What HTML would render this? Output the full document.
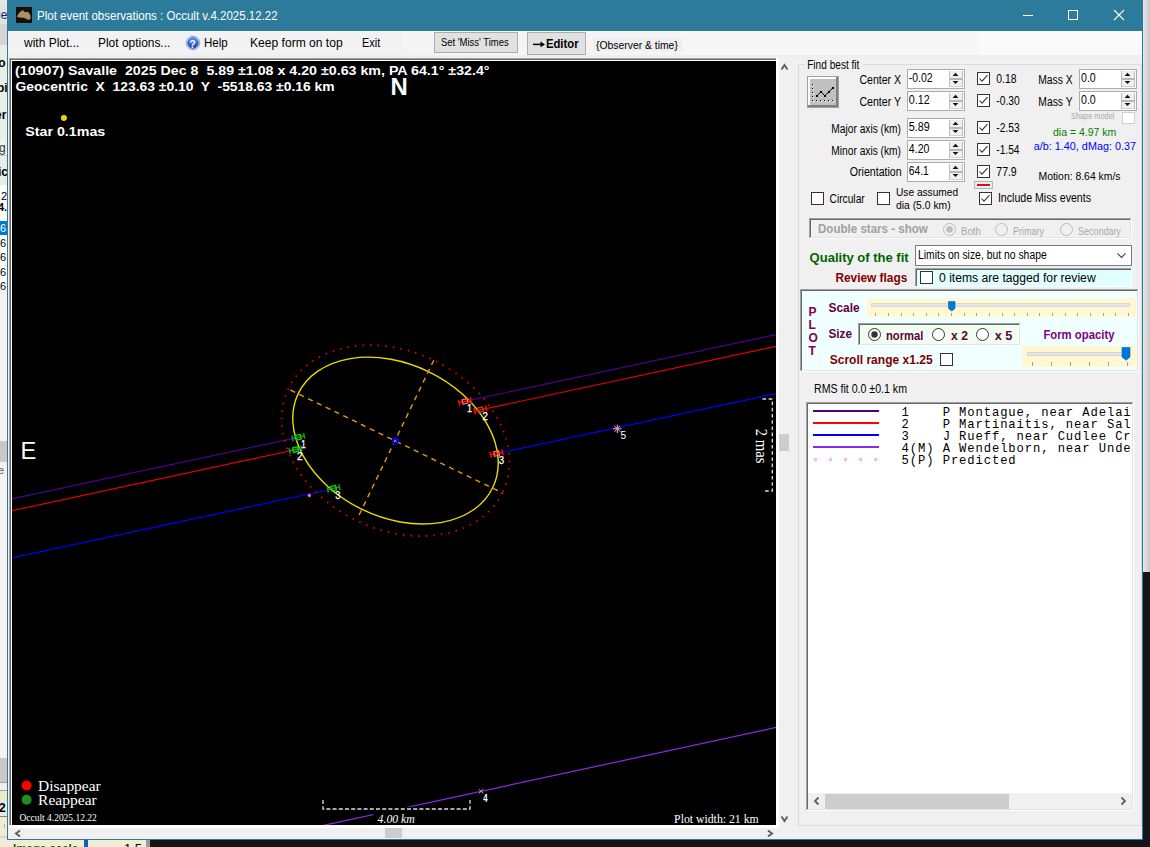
<!DOCTYPE html>
<html><head><meta charset="utf-8"><title>Plot event observations</title>
<style>html,body{margin:0;padding:0;overflow:hidden;background:#141414;width:1150px;height:847px}
svg{position:absolute;left:0;top:0;display:block}
text{white-space:pre}</style></head>
<body><svg width="1150" height="847" viewBox="0 0 1150 847">
<rect x="0" y="0" width="1150" height="847" fill="#141414" />
<rect x="0" y="0" width="7" height="847" fill="#eef3ee" />
<rect x="0" y="0" width="7" height="4" fill="#e6e6e6" />
<rect x="0" y="4" width="7" height="20" fill="#e2e2e2" />
<text x="-6.00" y="19" fill="#1a1a6a" style="font-family:'Liberation Sans';font-size:12px;font-weight:normal;font-style:normal" xml:space="preserve" >ue</text>
<rect x="0" y="24" width="7" height="21" fill="#d6d6d6" />
<rect x="0" y="45" width="7" height="95" fill="#e8f0e6" />
<text x="-5.00" y="67" fill="#000" style="font-family:'Liberation Sans';font-size:12px;font-weight:bold;font-style:normal" xml:space="preserve" >lo</text>
<text x="-3.00" y="92" fill="#000" style="font-family:'Liberation Sans';font-size:12px;font-weight:bold;font-style:normal" xml:space="preserve" >bi</text>
<text x="-5.00" y="119" fill="#000" style="font-family:'Liberation Sans';font-size:12px;font-weight:bold;font-style:normal" xml:space="preserve" >er</text>
<rect x="0" y="140" width="7" height="15" fill="#f0f0f0" />
<rect x="0" y="155" width="7" height="1" fill="#c8c8c8" />
<text x="-1.00" y="152" fill="#333" style="font-family:'Liberation Sans';font-size:12px;font-weight:normal;font-style:normal" xml:space="preserve" >g</text>
<rect x="0" y="156" width="7" height="29" fill="#e6eee6" />
<text x="-2.00" y="176" fill="#000" style="font-family:'Liberation Sans';font-size:12px;font-weight:bold;font-style:normal" xml:space="preserve" >ic</text>
<rect x="0" y="185" width="7" height="260" fill="#ffffff" />
<text x="1.00" y="200" fill="#000" style="font-family:'Liberation Sans';font-size:11px;font-weight:normal;font-style:normal" xml:space="preserve" >2</text>
<text x="-2.00" y="211" fill="#000" style="font-family:'Liberation Sans';font-size:11px;font-weight:bold;font-style:normal" xml:space="preserve" >4.</text>
<rect x="0" y="221" width="7" height="14" fill="#0078d7" />
<text x="0.00" y="232" fill="#fff" style="font-family:'Liberation Sans';font-size:11px;font-weight:normal;font-style:normal" xml:space="preserve" >6</text>
<text x="0.00" y="247" fill="#000" style="font-family:'Liberation Sans';font-size:11px;font-weight:normal;font-style:normal" xml:space="preserve" >6</text>
<text x="0.00" y="261" fill="#000" style="font-family:'Liberation Sans';font-size:11px;font-weight:normal;font-style:normal" xml:space="preserve" >6</text>
<text x="0.00" y="276" fill="#000" style="font-family:'Liberation Sans';font-size:11px;font-weight:normal;font-style:normal" xml:space="preserve" >6</text>
<text x="0.00" y="290" fill="#000" style="font-family:'Liberation Sans';font-size:11px;font-weight:normal;font-style:normal" xml:space="preserve" >6</text>
<rect x="0" y="290" width="7" height="151" fill="#f2f2f2" />
<rect x="0" y="441" width="7" height="21" fill="#c8c8c8" />
<rect x="0" y="462" width="7" height="16" fill="#f0f0f0" />
<text x="-2.00" y="474" fill="#7a5a30" style="font-family:'Liberation Sans';font-size:11px;font-weight:normal;font-style:normal" xml:space="preserve" >e</text>
<rect x="0" y="478" width="7" height="280" fill="#f4f4f4" />
<rect x="0" y="758" width="7" height="24" fill="#c8c8c8" />
<rect x="0" y="782" width="7" height="1" fill="#a0a0a0" />
<rect x="0" y="783" width="7" height="7" fill="#eeeeee" />
<rect x="0" y="790" width="7" height="1" fill="#a0a0a0" />
<rect x="0" y="791" width="7" height="9" fill="#ece8c8" />
<rect x="0" y="800" width="7" height="16" fill="#e8e8e8" />
<text x="-1.00" y="812" fill="#000" style="font-family:'Liberation Sans';font-size:12px;font-weight:bold;font-style:normal" xml:space="preserve" >2</text>
<rect x="0" y="816" width="7" height="1" fill="#808080" />
<rect x="0" y="817" width="7" height="19" fill="#f0ecd0" />
<rect x="4" y="824" width="1" height="4" fill="#b0b0b0" />
<rect x="0" y="836" width="7" height="2" fill="#d4d4d4" />
<rect x="0" y="838" width="7" height="2" fill="#f0ecd0" />
<rect x="0" y="840" width="150" height="7" fill="#f1eed5" />
<rect x="84" y="840" width="4" height="7" fill="#1060c0" />
<rect x="146" y="840" width="4" height="7" fill="#9a9a9a" />
<text x="13.00" y="853" fill="#007000" style="font-family:'Liberation Sans';font-size:13px;font-weight:bold;font-style:normal" xml:space="preserve" textLength="65.20" lengthAdjust="spacingAndGlyphs" >Image scale</text>
<text x="124.00" y="853" fill="#000" style="font-family:'Liberation Sans';font-size:13px;font-weight:normal;font-style:normal" xml:space="preserve" >1.5</text>
<defs><linearGradient id="rg" x1="0" y1="0" x2="1" y2="0"><stop offset="0" stop-color="#e6e6e6"/><stop offset="1" stop-color="#c8c8c8"/></linearGradient></defs>
<rect x="1143" y="0" width="7" height="572" fill="url(#rg)"/>
<rect x="1143" y="572" width="7" height="275" fill="#161616" />
<rect x="7" y="0" width="1136" height="840" fill="#2d7b9a" />
<rect x="8" y="31" width="1134" height="808" fill="#f0f0f0" />
<rect x="16" y="7" width="16" height="16" fill="#12100c"/>
<path d="M17.1 16.3 C18 13.5 20.5 11.5 22 10.4 C23 9.9 24 11.5 25.1 12.4 C26 11.8 27.3 11.6 28.3 12.4 C30 13.5 30.8 15.5 30.6 17.2 C30.5 19 29.8 20 28.5 19.8 C27 19.6 25.5 18.4 24 17.8 C22.5 17.5 21 17.6 19.5 17.4 C18 17.4 17 17.2 17.1 16.3 Z" fill="#ae8e66"/>
<text x="37.00" y="20" fill="#ffffff" style="font-family:'Liberation Sans';font-size:12px;font-weight:normal;font-style:normal" xml:space="preserve" textLength="240.69" lengthAdjust="spacingAndGlyphs" >Plot event observations : Occult v.4.2025.12.22</text>
<rect x="1023" y="15" width="10" height="1" fill="#ffffff" />
<rect x="1068.5" y="10.5" width="9" height="9" fill="none" stroke="#fff" stroke-width="1"/>
<path d="M1114 10 L1124 20 M1124 10 L1114 20" stroke="#fff" stroke-width="1.1"/>
<rect x="8" y="31" width="1134" height="1" fill="#fcfbfb" />
<rect x="8" y="32" width="395" height="23" fill="#f2f2f2" />
<rect x="403" y="32" width="277" height="23" fill="#f4f4f4" />
<rect x="680" y="32" width="300" height="23" fill="#f7f7f7" />
<rect x="980" y="32" width="162" height="23" fill="#fafafa" />
<rect x="8" y="55" width="1134" height="3" fill="#efefef" />
<text x="24.00" y="47" fill="#000" style="font-family:'Liberation Sans';font-size:12px;font-weight:normal;font-style:normal" xml:space="preserve" textLength="55.33" lengthAdjust="spacingAndGlyphs" >with Plot...</text>
<text x="98.00" y="47" fill="#000" style="font-family:'Liberation Sans';font-size:12px;font-weight:normal;font-style:normal" xml:space="preserve" textLength="72.33" lengthAdjust="spacingAndGlyphs" >Plot options...</text>
<defs><linearGradient id="hg" x1="0" y1="0" x2="0" y2="1"><stop offset="0" stop-color="#5a9af5"/><stop offset="1" stop-color="#1440b0"/></linearGradient></defs>
<circle cx="193" cy="43" r="6.8" fill="#e4ecf8" stroke="#6f95d8" stroke-width="0.8"/>
<circle cx="193" cy="43" r="5.4" fill="url(#hg)" stroke="#2050b0" stroke-width="0.6"/>
<text x="189.60" y="47.5" fill="#ffffff" style="font-family:'Liberation Sans';font-size:10px;font-weight:bold;font-style:normal" xml:space="preserve" >?</text>
<text x="204.00" y="47" fill="#000" style="font-family:'Liberation Sans';font-size:12px;font-weight:normal;font-style:normal" xml:space="preserve" textLength="23.69" lengthAdjust="spacingAndGlyphs" >Help</text>
<text x="250.00" y="47" fill="#000" style="font-family:'Liberation Sans';font-size:12px;font-weight:normal;font-style:normal" xml:space="preserve" textLength="92.67" lengthAdjust="spacingAndGlyphs" >Keep form on top</text>
<text x="362.00" y="47" fill="#000" style="font-family:'Liberation Sans';font-size:12px;font-weight:normal;font-style:normal" xml:space="preserve" textLength="18.39" lengthAdjust="spacingAndGlyphs" >Exit</text>
<rect x="434" y="32" width="84" height="21" fill="#e1e1e1" />
<rect x="434.5" y="32.5" width="83" height="20" fill="none" stroke="#adadad"/>
<text x="440.90" y="45.8" fill="#000" style="font-family:'Liberation Sans';font-size:10px;font-weight:normal;font-style:normal" xml:space="preserve" textLength="67.80" lengthAdjust="spacingAndGlyphs" >Set &#x27;Miss&#x27; Times</text>
<rect x="527" y="32" width="59" height="23" fill="#e1e1e1" />
<rect x="527.5" y="32.5" width="58" height="22" fill="none" stroke="#adadad"/>
<path d="M533 44.4 H543" stroke="#000" stroke-width="1.5"/>
<path d="M540.5 41.6 L545 44.4 L540.5 47.2 Z" fill="#000"/>
<text x="545.90" y="47.8" fill="#000" style="font-family:'Liberation Sans';font-size:12.5px;font-weight:bold;font-style:normal" xml:space="preserve" textLength="32.68" lengthAdjust="spacingAndGlyphs" >Editor</text>
<rect x="593" y="38" width="89" height="13" fill="#efefef" />
<text x="596.00" y="49" fill="#000" style="font-family:'Liberation Sans';font-size:11.5px;font-weight:normal;font-style:normal" xml:space="preserve" textLength="81.86" lengthAdjust="spacingAndGlyphs" >{Observer &amp; time}</text>
<rect x="8" y="57" width="780" height="782" fill="#f0f0f0" />
<rect x="9" y="58" width="768" height="1" fill="#a0a0a0" />
<rect x="9" y="58" width="1" height="770" fill="#a0a0a0" />
<rect x="10" y="59" width="766" height="1" fill="#696969" />
<rect x="10" y="59" width="1" height="768" fill="#696969" />
<rect x="11" y="60" width="766" height="766" fill="#ffffff" />
<rect x="12" y="61" width="764" height="764" fill="#000000" />
<rect x="776" y="58" width="3" height="770" fill="#ffffff" />
<rect x="9" y="825" width="770" height="3" fill="#ffffff" />
<rect x="779" y="58" width="11" height="770" fill="#f0f0f0" />
<rect x="779" y="434" width="10" height="17" fill="#cdcdcd" />
<path d="M781.5 69.5 L784.5 65 L787.5 69.5" fill="none" stroke="#606060" stroke-width="2"/>
<path d="M781.5 816.5 L784.5 821 L787.5 816.5" fill="none" stroke="#606060" stroke-width="2"/>
<rect x="9" y="828" width="770" height="11" fill="#f0f0f0" />
<rect x="385" y="828" width="17" height="10" fill="#cdcdcd" />
<path d="M20 830.5 L16 833.5 L20 836.5" fill="none" stroke="#606060" stroke-width="2"/>
<path d="M768 830.5 L772 833.5 L768 836.5" fill="none" stroke="#606060" stroke-width="2"/>
<svg x="12" y="61" width="764" height="764" viewBox="12 61 764 764" overflow="hidden">
<line x1="0" y1="501.51" x2="298.3" y2="437.32" stroke="#4a0092" stroke-width="1.2"/>
<line x1="465" y1="401.44" x2="790" y2="331.50" stroke="#4a0092" stroke-width="1.2"/>
<line x1="0" y1="513.31" x2="295.5" y2="449.72" stroke="#e80000" stroke-width="1.2"/>
<line x1="480.4" y1="409.93" x2="790" y2="343.30" stroke="#e80000" stroke-width="1.2"/>
<line x1="0" y1="560.51" x2="333.6" y2="488.72" stroke="#0000ff" stroke-width="1.2"/>
<line x1="496.6" y1="453.64" x2="790" y2="390.50" stroke="#0000ff" stroke-width="1.2"/>
<line x1="300" y1="830.44" x2="790" y2="724.46" stroke="#8a2be2" stroke-width="1.2"/>
<ellipse cx="395.5" cy="440.6" rx="119" ry="89" transform="rotate(25.9 395.5 440.6)" fill="none" stroke="#dd0000" stroke-width="1.8" stroke-dasharray="1.6 6.0"/>
<ellipse cx="395.5" cy="440.6" rx="108" ry="76.5" transform="rotate(25.9 395.5 440.6)" fill="none" stroke="#e8dc00" stroke-width="1.4"/>
<line x1="290.4" y1="390" x2="502.5" y2="493" stroke="#e89a00" stroke-width="1.4" stroke-dasharray="5.2 4.6"/>
<line x1="433.8" y1="360.2" x2="357.2" y2="519" stroke="#e89a00" stroke-width="1.4" stroke-dasharray="5.2 4.6"/>
<circle cx="395.3" cy="440.7" r="2.6" fill="none" stroke="#0000ff" stroke-width="2"/>
<g transform="translate(298.3 437.2) rotate(-12.14)"><path d="M-6 0 H6 M-6 -3 V3 M6 -3 V3" stroke="#22882a" stroke-width="1.6" fill="none"/><rect x="-2.5" y="-2.3" width="5" height="4.6" fill="none" stroke="#00e000" stroke-width="1.3"/></g>
<g transform="translate(295.5 449.6) rotate(-12.14)"><path d="M-6 0 H6 M-6 -3 V3 M6 -3 V3" stroke="#22882a" stroke-width="1.6" fill="none"/><rect x="-2.5" y="-2.3" width="5" height="4.6" fill="none" stroke="#00e000" stroke-width="1.3"/></g>
<g transform="translate(333.6 488.3) rotate(-12.14)"><path d="M-6 0 H6 M-6 -3 V3 M6 -3 V3" stroke="#22882a" stroke-width="1.6" fill="none"/><rect x="-2.5" y="-2.3" width="5" height="4.6" fill="none" stroke="#00e000" stroke-width="1.3"/></g>
<g transform="translate(465 401.4) rotate(-12.14)"><path d="M-6 0 H6 M-6 -3 V3 M6 -3 V3" stroke="#ff0000" stroke-width="1.6" fill="none"/><rect x="-2.5" y="-2.3" width="5" height="4.6" fill="none" stroke="#f07050" stroke-width="1.3"/></g>
<g transform="translate(480.4 409.8) rotate(-12.14)"><path d="M-6 0 H6 M-6 -3 V3 M6 -3 V3" stroke="#ff0000" stroke-width="1.6" fill="none"/><rect x="-2.5" y="-2.3" width="5" height="4.6" fill="none" stroke="#b04030" stroke-width="1.3"/></g>
<g transform="translate(496.6 453.5) rotate(-12.14)"><path d="M-6 0 H6 M-6 -3 V3 M6 -3 V3" stroke="#ff0000" stroke-width="1.6" fill="none"/><rect x="-2.5" y="-2.3" width="5" height="4.6" fill="none" stroke="#f07050" stroke-width="1.3"/></g>
<text x="301.00" y="448" fill="#ffffff" style="font-family:'Liberation Sans';font-size:10.5px;font-weight:normal;font-style:normal" xml:space="preserve" textLength="4.87" lengthAdjust="spacingAndGlyphs" stroke="#ffffff" stroke-width="0.25">1</text>
<text x="297.00" y="459.7" fill="#ffffff" style="font-family:'Liberation Sans';font-size:10.5px;font-weight:normal;font-style:normal" xml:space="preserve" textLength="5.55" lengthAdjust="spacingAndGlyphs" stroke="#ffffff" stroke-width="0.25">2</text>
<text x="335.20" y="498.8" fill="#ffffff" style="font-family:'Liberation Sans';font-size:10.5px;font-weight:normal;font-style:normal" xml:space="preserve" textLength="5.16" lengthAdjust="spacingAndGlyphs" stroke="#ffffff" stroke-width="0.25">3</text>
<text x="467.00" y="412" fill="#ffffff" style="font-family:'Liberation Sans';font-size:10.5px;font-weight:normal;font-style:normal" xml:space="preserve" textLength="5.06" lengthAdjust="spacingAndGlyphs" stroke="#ffffff" stroke-width="0.25">1</text>
<text x="482.50" y="419.7" fill="#ffffff" style="font-family:'Liberation Sans';font-size:10.5px;font-weight:normal;font-style:normal" xml:space="preserve" textLength="5.35" lengthAdjust="spacingAndGlyphs" stroke="#ffffff" stroke-width="0.25">2</text>
<text x="498.80" y="463.8" fill="#ffffff" style="font-family:'Liberation Sans';font-size:10.5px;font-weight:normal;font-style:normal" xml:space="preserve" textLength="5.35" lengthAdjust="spacingAndGlyphs" stroke="#ffffff" stroke-width="0.25">3</text>
<circle cx="309.3" cy="495.4" r="1.5" fill="#ff90d0" stroke="#c04080" stroke-width="0.7"/>
<g stroke="#c8c8c8" stroke-width="1"><path d="M613 428.8 H621.6 M617.3 424.5 V433.1 M614.3 425.8 L620.3 431.8 M620.3 425.8 L614.3 431.8"/></g>
<circle cx="617.3" cy="428.8" r="1.7" fill="#ff70c0"/>
<text x="620.50" y="438.5" fill="#ffffff" style="font-family:'Liberation Sans';font-size:10px;font-weight:normal;font-style:normal" xml:space="preserve" textLength="5.56" lengthAdjust="spacingAndGlyphs" >5</text>
<path d="M478.6 789 L483.4 793.6 M483.4 789 L478.6 793.6" stroke="#b8b8b8" stroke-width="1"/>
<text x="483.30" y="802" fill="#ffffff" style="font-family:'Liberation Sans';font-size:10px;font-weight:bold;font-style:normal" xml:space="preserve" textLength="4.36" lengthAdjust="spacingAndGlyphs" >4</text>
<text x="15.00" y="74.8" fill="#ffffff" style="font-family:'Liberation Sans';font-size:13px;font-weight:bold;font-style:normal" xml:space="preserve" textLength="474.52" lengthAdjust="spacingAndGlyphs" >(10907) Savalle  2025 Dec 8  5.89 ±1.08 x 4.20 ±0.63 km, PA 64.1° ±32.4°</text>
<text x="15.50" y="90.6" fill="#ffffff" style="font-family:'Liberation Sans';font-size:13px;font-weight:bold;font-style:normal" xml:space="preserve" textLength="319.10" lengthAdjust="spacingAndGlyphs" >Geocentric  X  123.63 ±0.10  Y  -5518.63 ±0.16 km</text>
<text x="390.49" y="94.8" fill="#ffffff" style="font-family:'Liberation Sans';font-size:23.6px;font-weight:bold;font-style:normal" xml:space="preserve" textLength="17.27" lengthAdjust="spacingAndGlyphs" >N</text>
<circle cx="63.9" cy="117.9" r="2.7" fill="#f5c800" stroke="#fff0a0" stroke-width="0.6"/>
<text x="25.30" y="135.6" fill="#ffffff" style="font-family:'Liberation Sans';font-size:13px;font-weight:bold;font-style:normal" xml:space="preserve" textLength="79.95" lengthAdjust="spacingAndGlyphs" >Star 0.1mas</text>
<text x="20.57" y="459" fill="#ffffff" style="font-family:'Liberation Sans';font-size:23px;font-weight:normal;font-style:normal" xml:space="preserve" textLength="15.78" lengthAdjust="spacingAndGlyphs" >E</text>
<rect x="373" y="806.8" width="50" height="19" fill="#000"/>
<path d="M323 800 V809 H470 V800" fill="none" stroke="#e0e0e0" stroke-width="1.3" stroke-dasharray="4 2.2"/>
<text x="377.60" y="822.6" fill="#ffffff" style="font-family:'Liberation Serif';font-size:13px;font-weight:normal;font-style:italic" xml:space="preserve" textLength="37.15" lengthAdjust="spacingAndGlyphs" >4.00 km</text>
<text x="674.10" y="822.7" fill="#ffffff" style="font-family:'Liberation Serif';font-size:13px;font-weight:normal;font-style:normal" xml:space="preserve" textLength="84.60" lengthAdjust="spacingAndGlyphs" >Plot width: 21 km</text>
<path d="M762.5 399 H772.3 V491 H762.5" fill="none" stroke="#e0e0e0" stroke-width="1.3" stroke-dasharray="3.6 2.6"/>
<text x="0.00" y="0" fill="#ffffff" style="font-family:'Liberation Serif';font-size:16px;font-weight:normal;font-style:normal" xml:space="preserve" transform="translate(756.4 428.7) rotate(90)" textLength="34.91" lengthAdjust="spacingAndGlyphs" >2 mas</text>
<circle cx="26.6" cy="785.5" r="5" fill="#ff0000"/>
<circle cx="26.6" cy="799.7" r="5" fill="#228b22"/>
<text x="38.10" y="790.7" fill="#ffffff" style="font-family:'Liberation Serif';font-size:15px;font-weight:normal;font-style:normal" xml:space="preserve" textLength="62.59" lengthAdjust="spacingAndGlyphs" >Disappear</text>
<text x="38.10" y="804.6" fill="#ffffff" style="font-family:'Liberation Serif';font-size:15px;font-weight:normal;font-style:normal" xml:space="preserve" textLength="58.69" lengthAdjust="spacingAndGlyphs" >Reappear</text>
<text x="19.40" y="820.7" fill="#ffffff" style="font-family:'Liberation Serif';font-size:10px;font-weight:normal;font-style:normal" xml:space="preserve" textLength="77.40" lengthAdjust="spacingAndGlyphs" >Occult 4.2025.12.22</text>
</svg>
<rect x="798.5" y="64.5" width="343" height="761" fill="none" stroke="#dcdcdc"/>
<rect x="805" y="58" width="58" height="12" fill="#f0f0f0" />
<text x="807.20" y="69" fill="#000" style="font-family:'Liberation Sans';font-size:12px;font-weight:normal;font-style:normal" xml:space="preserve" textLength="52.24" lengthAdjust="spacingAndGlyphs" >Find best fit</text>
<rect x="807.5" y="76.5" width="31" height="31" fill="#c0c0c0" stroke="#a0a0a0"/>
<rect x="808" y="77" width="29" height="2" fill="#ffffff" />
<rect x="808" y="77" width="2" height="29" fill="#ffffff" />
<rect x="808" y="105" width="30" height="2" fill="#808080" />
<rect x="836" y="77" width="2" height="30" fill="#808080" />
<path d="M816.9 95.8 L820.9 91.8 L824.9 95.8 L828.9 91.8 L833 87.8" fill="none" stroke="#000" stroke-width="1"/>
<rect x="813" y="85" width="1" height="1" fill="#ffffff" />
<rect x="812" y="84" width="1" height="1" fill="#000000" />
<rect x="813" y="89" width="1" height="1" fill="#ffffff" />
<rect x="812" y="88" width="1" height="1" fill="#000000" />
<rect x="813" y="93" width="1" height="1" fill="#ffffff" />
<rect x="812" y="92" width="1" height="1" fill="#000000" />
<rect x="813" y="97" width="1" height="1" fill="#ffffff" />
<rect x="812" y="96" width="1" height="1" fill="#000000" />
<rect x="813" y="101" width="1" height="1" fill="#ffffff" />
<rect x="812" y="100" width="1" height="1" fill="#000000" />
<rect x="817" y="101" width="1" height="1" fill="#ffffff" />
<rect x="816" y="100" width="1" height="1" fill="#000000" />
<rect x="821" y="101" width="1" height="1" fill="#ffffff" />
<rect x="820" y="100" width="1" height="1" fill="#000000" />
<rect x="825" y="101" width="1" height="1" fill="#ffffff" />
<rect x="824" y="100" width="1" height="1" fill="#000000" />
<rect x="829" y="101" width="1" height="1" fill="#ffffff" />
<rect x="828" y="100" width="1" height="1" fill="#000000" />
<rect x="833" y="101" width="1" height="1" fill="#ffffff" />
<rect x="832" y="100" width="1" height="1" fill="#000000" />
<rect x="816" y="95" width="2" height="2" fill="#000" />
<rect x="820" y="91" width="2" height="2" fill="#000" />
<rect x="824" y="95" width="2" height="2" fill="#000" />
<rect x="828" y="91" width="2" height="2" fill="#000" />
<rect x="832" y="87" width="2" height="2" fill="#000" />
<text x="859.40" y="83.8" fill="#000" style="font-family:'Liberation Sans';font-size:12px;font-weight:normal;font-style:normal" xml:space="preserve" textLength="41.70" lengthAdjust="spacingAndGlyphs" >Center X</text>
<text x="859.40" y="106" fill="#000" style="font-family:'Liberation Sans';font-size:12px;font-weight:normal;font-style:normal" xml:space="preserve" textLength="41.70" lengthAdjust="spacingAndGlyphs" >Center Y</text>
<text x="831.30" y="132.5" fill="#000" style="font-family:'Liberation Sans';font-size:12px;font-weight:normal;font-style:normal" xml:space="preserve" textLength="69.70" lengthAdjust="spacingAndGlyphs" >Major axis (km)</text>
<text x="831.30" y="154.7" fill="#000" style="font-family:'Liberation Sans';font-size:12px;font-weight:normal;font-style:normal" xml:space="preserve" textLength="69.70" lengthAdjust="spacingAndGlyphs" >Minor axis (km)</text>
<text x="849.80" y="175.6" fill="#000" style="font-family:'Liberation Sans';font-size:12px;font-weight:normal;font-style:normal" xml:space="preserve" textLength="51.79" lengthAdjust="spacingAndGlyphs" >Orientation</text>
<rect x="907" y="69" width="58" height="20" fill="#ffffff" />
<rect x="907.5" y="69.5" width="57" height="19" fill="none" stroke="#acacac"/>
<rect x="949" y="71" width="14" height="16" fill="#f0f0f0" />
<rect x="949" y="71" width="1" height="16" fill="#bdbdbd" />
<rect x="962" y="71" width="1" height="16" fill="#bdbdbd" />
<rect x="950" y="86" width="12" height="1" fill="#d4d4d4" />
<rect x="950" y="78" width="12" height="2" fill="#b6b6b6" />
<path d="M952.6 75.9 L958.4 75.9 L955.5 72.8 Z" fill="#111"/>
<path d="M952.6 81.1 L958.4 81.1 L955.5 84.1 Z" fill="#111"/>
<text x="908.80" y="82.3" fill="#000" style="font-family:'Liberation Sans';font-size:12px;font-weight:normal;font-style:normal" xml:space="preserve" textLength="23.82" lengthAdjust="spacingAndGlyphs" >-0.02</text>
<rect x="907" y="91" width="58" height="20" fill="#ffffff" />
<rect x="907.5" y="91.5" width="57" height="19" fill="none" stroke="#acacac"/>
<rect x="949" y="93" width="14" height="16" fill="#f0f0f0" />
<rect x="949" y="93" width="1" height="16" fill="#bdbdbd" />
<rect x="962" y="93" width="1" height="16" fill="#bdbdbd" />
<rect x="950" y="108" width="12" height="1" fill="#d4d4d4" />
<rect x="950" y="100" width="12" height="2" fill="#b6b6b6" />
<path d="M952.6 97.9 L958.4 97.9 L955.5 94.8 Z" fill="#111"/>
<path d="M952.6 103.1 L958.4 103.1 L955.5 106.1 Z" fill="#111"/>
<text x="908.80" y="104.3" fill="#000" style="font-family:'Liberation Sans';font-size:12px;font-weight:normal;font-style:normal" xml:space="preserve" textLength="20.91" lengthAdjust="spacingAndGlyphs" >0.12</text>
<rect x="907" y="118" width="58" height="20" fill="#ffffff" />
<rect x="907.5" y="118.5" width="57" height="19" fill="none" stroke="#acacac"/>
<rect x="949" y="120" width="14" height="16" fill="#f0f0f0" />
<rect x="949" y="120" width="1" height="16" fill="#bdbdbd" />
<rect x="962" y="120" width="1" height="16" fill="#bdbdbd" />
<rect x="950" y="135" width="12" height="1" fill="#d4d4d4" />
<rect x="950" y="127" width="12" height="2" fill="#b6b6b6" />
<path d="M952.6 124.9 L958.4 124.9 L955.5 121.8 Z" fill="#111"/>
<path d="M952.6 130.1 L958.4 130.1 L955.5 133.1 Z" fill="#111"/>
<text x="908.80" y="131.3" fill="#000" style="font-family:'Liberation Sans';font-size:12px;font-weight:normal;font-style:normal" xml:space="preserve" textLength="20.91" lengthAdjust="spacingAndGlyphs" >5.89</text>
<rect x="907" y="140" width="58" height="20" fill="#ffffff" />
<rect x="907.5" y="140.5" width="57" height="19" fill="none" stroke="#acacac"/>
<rect x="949" y="142" width="14" height="16" fill="#f0f0f0" />
<rect x="949" y="142" width="1" height="16" fill="#bdbdbd" />
<rect x="962" y="142" width="1" height="16" fill="#bdbdbd" />
<rect x="950" y="157" width="12" height="1" fill="#d4d4d4" />
<rect x="950" y="149" width="12" height="2" fill="#b6b6b6" />
<path d="M952.6 146.9 L958.4 146.9 L955.5 143.8 Z" fill="#111"/>
<path d="M952.6 152.1 L958.4 152.1 L955.5 155.1 Z" fill="#111"/>
<text x="908.80" y="153.3" fill="#000" style="font-family:'Liberation Sans';font-size:12px;font-weight:normal;font-style:normal" xml:space="preserve" textLength="20.61" lengthAdjust="spacingAndGlyphs" >4.20</text>
<rect x="907" y="162" width="58" height="20" fill="#ffffff" />
<rect x="907.5" y="162.5" width="57" height="19" fill="none" stroke="#acacac"/>
<rect x="949" y="164" width="14" height="16" fill="#f0f0f0" />
<rect x="949" y="164" width="1" height="16" fill="#bdbdbd" />
<rect x="962" y="164" width="1" height="16" fill="#bdbdbd" />
<rect x="950" y="179" width="12" height="1" fill="#d4d4d4" />
<rect x="950" y="171" width="12" height="2" fill="#b6b6b6" />
<path d="M952.6 168.9 L958.4 168.9 L955.5 165.8 Z" fill="#111"/>
<path d="M952.6 174.1 L958.4 174.1 L955.5 177.1 Z" fill="#111"/>
<text x="908.80" y="175.3" fill="#000" style="font-family:'Liberation Sans';font-size:12px;font-weight:normal;font-style:normal" xml:space="preserve" textLength="19.92" lengthAdjust="spacingAndGlyphs" >64.1</text>
<rect x="977.5" y="72.5" width="12" height="12" fill="#ffffff" stroke="#333333" stroke-width="1"/>
<path d="M979.5 78.5 L982 81.2 L987.5 75.2" fill="none" stroke="#333" stroke-width="1.1"/>
<rect x="977.5" y="94.5" width="12" height="12" fill="#ffffff" stroke="#333333" stroke-width="1"/>
<path d="M979.5 100.5 L982 103.2 L987.5 97.2" fill="none" stroke="#333" stroke-width="1.1"/>
<rect x="977.5" y="121.5" width="12" height="12" fill="#ffffff" stroke="#333333" stroke-width="1"/>
<path d="M979.5 127.5 L982 130.2 L987.5 124.2" fill="none" stroke="#333" stroke-width="1.1"/>
<rect x="977.5" y="143.5" width="12" height="12" fill="#ffffff" stroke="#333333" stroke-width="1"/>
<path d="M979.5 149.5 L982 152.2 L987.5 146.2" fill="none" stroke="#333" stroke-width="1.1"/>
<rect x="977.5" y="165.5" width="12" height="12" fill="#ffffff" stroke="#333333" stroke-width="1"/>
<path d="M979.5 171.5 L982 174.2 L987.5 168.2" fill="none" stroke="#333" stroke-width="1.1"/>
<text x="996.30" y="82.8" fill="#000" style="font-family:'Liberation Sans';font-size:12px;font-weight:normal;font-style:normal" xml:space="preserve" textLength="20.22" lengthAdjust="spacingAndGlyphs" >0.18</text>
<text x="996.30" y="104.6" fill="#000" style="font-family:'Liberation Sans';font-size:12px;font-weight:normal;font-style:normal" xml:space="preserve" textLength="23.42" lengthAdjust="spacingAndGlyphs" >-0.30</text>
<text x="996.30" y="131.6" fill="#000" style="font-family:'Liberation Sans';font-size:12px;font-weight:normal;font-style:normal" xml:space="preserve" textLength="23.42" lengthAdjust="spacingAndGlyphs" >-2.53</text>
<text x="996.30" y="153.8" fill="#000" style="font-family:'Liberation Sans';font-size:12px;font-weight:normal;font-style:normal" xml:space="preserve" textLength="23.12" lengthAdjust="spacingAndGlyphs" >-1.54</text>
<text x="996.30" y="175.5" fill="#000" style="font-family:'Liberation Sans';font-size:12px;font-weight:normal;font-style:normal" xml:space="preserve" textLength="20.41" lengthAdjust="spacingAndGlyphs" >77.9</text>
<text x="1038.30" y="83.8" fill="#000" style="font-family:'Liberation Sans';font-size:12px;font-weight:normal;font-style:normal" xml:space="preserve" textLength="34.30" lengthAdjust="spacingAndGlyphs" >Mass X</text>
<text x="1038.30" y="106" fill="#000" style="font-family:'Liberation Sans';font-size:12px;font-weight:normal;font-style:normal" xml:space="preserve" textLength="34.30" lengthAdjust="spacingAndGlyphs" >Mass Y</text>
<rect x="1079" y="69" width="58" height="20" fill="#ffffff" />
<rect x="1079.5" y="69.5" width="57" height="19" fill="none" stroke="#acacac"/>
<rect x="1121" y="71" width="14" height="16" fill="#f0f0f0" />
<rect x="1121" y="71" width="1" height="16" fill="#bdbdbd" />
<rect x="1134" y="71" width="1" height="16" fill="#bdbdbd" />
<rect x="1122" y="86" width="12" height="1" fill="#d4d4d4" />
<rect x="1122" y="78" width="12" height="2" fill="#b6b6b6" />
<path d="M1124.6 75.9 L1130.4 75.9 L1127.5 72.8 Z" fill="#111"/>
<path d="M1124.6 81.1 L1130.4 81.1 L1127.5 84.1 Z" fill="#111"/>
<text x="1081.00" y="82.3" fill="#000" style="font-family:'Liberation Sans';font-size:12px;font-weight:normal;font-style:normal" xml:space="preserve" textLength="14.71" lengthAdjust="spacingAndGlyphs" >0.0</text>
<rect x="1079" y="91" width="58" height="20" fill="#ffffff" />
<rect x="1079.5" y="91.5" width="57" height="19" fill="none" stroke="#acacac"/>
<rect x="1121" y="93" width="14" height="16" fill="#f0f0f0" />
<rect x="1121" y="93" width="1" height="16" fill="#bdbdbd" />
<rect x="1134" y="93" width="1" height="16" fill="#bdbdbd" />
<rect x="1122" y="108" width="12" height="1" fill="#d4d4d4" />
<rect x="1122" y="100" width="12" height="2" fill="#b6b6b6" />
<path d="M1124.6 97.9 L1130.4 97.9 L1127.5 94.8 Z" fill="#111"/>
<path d="M1124.6 103.1 L1130.4 103.1 L1127.5 106.1 Z" fill="#111"/>
<text x="1081.00" y="104.3" fill="#000" style="font-family:'Liberation Sans';font-size:12px;font-weight:normal;font-style:normal" xml:space="preserve" textLength="14.71" lengthAdjust="spacingAndGlyphs" >0.0</text>
<text x="1071.00" y="119.4" fill="#a8a8a8" style="font-family:'Liberation Sans';font-size:9px;font-weight:normal;font-style:normal" xml:space="preserve" textLength="43.40" lengthAdjust="spacingAndGlyphs" >Shape model</text>
<rect x="1122.5" y="112.5" width="12" height="11" fill="#ffffff" stroke="#d0d0d0"/>
<text x="1053.00" y="135.8" fill="#008000" style="font-family:'Liberation Sans';font-size:11.5px;font-weight:normal;font-style:normal" xml:space="preserve" textLength="63.23" lengthAdjust="spacingAndGlyphs" >dia = 4.97 km</text>
<text x="1033.80" y="149.7" fill="#0000ff" style="font-family:'Liberation Sans';font-size:11.5px;font-weight:normal;font-style:normal" xml:space="preserve" textLength="102.17" lengthAdjust="spacingAndGlyphs" >a/b: 1.40, dMag: 0.37</text>
<text x="1038.50" y="179.7" fill="#000" style="font-family:'Liberation Sans';font-size:11.5px;font-weight:normal;font-style:normal" xml:space="preserve" textLength="81.97" lengthAdjust="spacingAndGlyphs" >Motion: 8.64 km/s</text>
<rect x="974.5" y="181.5" width="18" height="7" fill="#e4f4f4" stroke="#b4b4b4"/>
<rect x="977" y="184" width="13" height="2" fill="#ff0000" />
<rect x="811.5" y="192.5" width="12" height="12" fill="#ffffff" stroke="#333333" stroke-width="1"/>
<text x="829.60" y="203" fill="#000" style="font-family:'Liberation Sans';font-size:12px;font-weight:normal;font-style:normal" xml:space="preserve" textLength="35.10" lengthAdjust="spacingAndGlyphs" >Circular</text>
<rect x="877.5" y="192.5" width="12" height="12" fill="#ffffff" stroke="#333333" stroke-width="1"/>
<text x="896.00" y="196.3" fill="#000" style="font-family:'Liberation Sans';font-size:11px;font-weight:normal;font-style:normal" xml:space="preserve" textLength="62.11" lengthAdjust="spacingAndGlyphs" >Use assumed</text>
<text x="896.00" y="209.3" fill="#000" style="font-family:'Liberation Sans';font-size:11px;font-weight:normal;font-style:normal" xml:space="preserve" textLength="54.62" lengthAdjust="spacingAndGlyphs" >dia (5.0 km)</text>
<rect x="979.5" y="192.5" width="12" height="12" fill="#ffffff" stroke="#333333" stroke-width="1"/>
<path d="M981.5 198.5 L984 201.2 L989.5 195.2" fill="none" stroke="#333" stroke-width="1.1"/>
<text x="997.92" y="202.4" fill="#000" style="font-family:'Liberation Sans';font-size:12px;font-weight:normal;font-style:normal" xml:space="preserve" textLength="93.08" lengthAdjust="spacingAndGlyphs" >Include Miss events</text>
<rect x="809" y="218" width="323" height="21" fill="#f0f0f0" />
<rect x="809" y="218" width="323" height="1" fill="#a0a0a0" />
<rect x="809" y="218" width="1" height="21" fill="#a0a0a0" />
<rect x="810" y="219" width="321" height="1" fill="#696969" />
<rect x="810" y="219" width="1" height="19" fill="#696969" />
<rect x="809" y="238" width="323" height="1" fill="#ffffff" />
<rect x="1131" y="218" width="1" height="21" fill="#ffffff" />
<rect x="810" y="237" width="321" height="1" fill="#e3e3e3" />
<rect x="1130" y="219" width="1" height="19" fill="#e3e3e3" />
<text x="818.00" y="233" fill="#a0a0a0" style="font-family:'Liberation Sans';font-size:12px;font-weight:bold;font-style:normal" xml:space="preserve" textLength="109.86" lengthAdjust="spacingAndGlyphs" >Double stars - show</text>
<circle cx="949.5" cy="229.5" r="6" fill="#f0f0f0" stroke="#bcbcbc" stroke-width="1"/>
<circle cx="949.5" cy="229.5" r="3.2" fill="#bcbcbc"/>
<text x="961.00" y="234.5" fill="#a8a8a8" style="font-family:'Liberation Sans';font-size:10.5px;font-weight:normal;font-style:normal" xml:space="preserve" textLength="19.85" lengthAdjust="spacingAndGlyphs" >Both</text>
<circle cx="1001.5" cy="229.5" r="6" fill="#f0f0f0" stroke="#bcbcbc" stroke-width="1"/>
<text x="1013.00" y="234.5" fill="#a8a8a8" style="font-family:'Liberation Sans';font-size:10.5px;font-weight:normal;font-style:normal" xml:space="preserve" textLength="30.86" lengthAdjust="spacingAndGlyphs" >Primary</text>
<circle cx="1066.5" cy="229.5" r="6" fill="#f0f0f0" stroke="#bcbcbc" stroke-width="1"/>
<text x="1078.00" y="234.5" fill="#a8a8a8" style="font-family:'Liberation Sans';font-size:10.5px;font-weight:normal;font-style:normal" xml:space="preserve" textLength="42.86" lengthAdjust="spacingAndGlyphs" >Secondary</text>
<text x="809.60" y="262.4" fill="#006400" style="font-family:'Liberation Sans';font-size:12.5px;font-weight:bold;font-style:normal" xml:space="preserve" textLength="99.03" lengthAdjust="spacingAndGlyphs" >Quality of the fit</text>
<rect x="915.5" y="245.5" width="216" height="20" fill="#ffffff" stroke="#7a7a7a"/>
<text x="918.00" y="259" fill="#000" style="font-family:'Liberation Sans';font-size:12px;font-weight:normal;font-style:normal" xml:space="preserve" textLength="128.72" lengthAdjust="spacingAndGlyphs" >Limits on size, but no shape</text>
<path d="M1117.5 253.5 L1121.5 257.5 L1125.5 253.5" fill="none" stroke="#444" stroke-width="1.1"/>
<text x="835.40" y="281.8" fill="#800000" style="font-family:'Liberation Sans';font-size:12.5px;font-weight:bold;font-style:normal" xml:space="preserve" textLength="71.95" lengthAdjust="spacingAndGlyphs" >Review flags</text>
<rect x="915" y="268" width="217" height="19" fill="#e0ffff" />
<rect x="915" y="268" width="217" height="1" fill="#a0a0a0" />
<rect x="915" y="268" width="1" height="19" fill="#a0a0a0" />
<rect x="916" y="269" width="215" height="1" fill="#696969" />
<rect x="916" y="269" width="1" height="17" fill="#696969" />
<rect x="915" y="286" width="217" height="1" fill="#ffffff" />
<rect x="1131" y="268" width="1" height="19" fill="#ffffff" />
<rect x="920.5" y="271.5" width="12" height="12" fill="#ffffff" stroke="#333333" stroke-width="1"/>
<text x="939.00" y="281.6" fill="#000" style="font-family:'Liberation Sans';font-size:12px;font-weight:normal;font-style:normal" xml:space="preserve" textLength="156.66" lengthAdjust="spacingAndGlyphs" >0 items are tagged for review</text>
<rect x="800" y="289" width="339" height="83" fill="#f0ffff" />
<rect x="800" y="289" width="339" height="1" fill="#a0a0a0" />
<rect x="800" y="289" width="1" height="83" fill="#a0a0a0" />
<rect x="801" y="290" width="337" height="1" fill="#696969" />
<rect x="801" y="290" width="1" height="81" fill="#696969" />
<rect x="800" y="371" width="339" height="1" fill="#ffffff" />
<rect x="1138" y="289" width="1" height="83" fill="#ffffff" />
<rect x="801" y="370" width="337" height="1" fill="#e3e3e3" />
<rect x="1137" y="290" width="1" height="81" fill="#e3e3e3" />
<text x="808.50" y="315.5" fill="#84004a" style="font-family:'Liberation Sans';font-size:12px;font-weight:bold;font-style:normal" xml:space="preserve" >P</text>
<text x="808.50" y="328.5" fill="#84004a" style="font-family:'Liberation Sans';font-size:12px;font-weight:bold;font-style:normal" xml:space="preserve" >L</text>
<text x="808.50" y="341.8" fill="#84004a" style="font-family:'Liberation Sans';font-size:12px;font-weight:bold;font-style:normal" xml:space="preserve" >O</text>
<text x="808.50" y="355" fill="#84004a" style="font-family:'Liberation Sans';font-size:12px;font-weight:bold;font-style:normal" xml:space="preserve" >T</text>
<text x="828.50" y="312" fill="#600040" style="font-family:'Liberation Sans';font-size:12.5px;font-weight:bold;font-style:normal" xml:space="preserve" textLength="31.15" lengthAdjust="spacingAndGlyphs" >Scale</text>
<rect x="867" y="298" width="269" height="19" fill="#fff8d2" />
<rect x="871.5" y="303.5" width="258" height="3" fill="#e6e6e6" stroke="#d6d6d6"/>
<rect x="875" y="313" width="1" height="3" fill="#a0a0a0" />
<rect x="888" y="313" width="1" height="3" fill="#a0a0a0" />
<rect x="901" y="313" width="1" height="3" fill="#a0a0a0" />
<rect x="913" y="313" width="1" height="3" fill="#a0a0a0" />
<rect x="926" y="313" width="1" height="3" fill="#a0a0a0" />
<rect x="938" y="313" width="1" height="3" fill="#a0a0a0" />
<rect x="951" y="313" width="1" height="3" fill="#a0a0a0" />
<rect x="964" y="313" width="1" height="3" fill="#a0a0a0" />
<rect x="976" y="313" width="1" height="3" fill="#a0a0a0" />
<rect x="989" y="313" width="1" height="3" fill="#a0a0a0" />
<rect x="1002" y="313" width="1" height="3" fill="#a0a0a0" />
<rect x="1014" y="313" width="1" height="3" fill="#a0a0a0" />
<rect x="1027" y="313" width="1" height="3" fill="#a0a0a0" />
<rect x="1039" y="313" width="1" height="3" fill="#a0a0a0" />
<rect x="1052" y="313" width="1" height="3" fill="#a0a0a0" />
<rect x="1065" y="313" width="1" height="3" fill="#a0a0a0" />
<rect x="1077" y="313" width="1" height="3" fill="#a0a0a0" />
<rect x="1090" y="313" width="1" height="3" fill="#a0a0a0" />
<rect x="1103" y="313" width="1" height="3" fill="#a0a0a0" />
<rect x="1115" y="313" width="1" height="3" fill="#a0a0a0" />
<rect x="1128" y="313" width="1" height="3" fill="#a0a0a0" />
<path d="M948.5 301.5 H955 V308.5 L951.75 311 L948.5 308.5 Z" fill="#0078d7" stroke="#0060c0" stroke-width="0.6"/>
<text x="828.50" y="337.5" fill="#600040" style="font-family:'Liberation Sans';font-size:12.5px;font-weight:bold;font-style:normal" xml:space="preserve" textLength="23.45" lengthAdjust="spacingAndGlyphs" >Size</text>
<rect x="858" y="323" width="163" height="23" fill="#f0fff0" />
<rect x="858" y="323" width="163" height="1" fill="#a0a0a0" />
<rect x="858" y="323" width="1" height="23" fill="#a0a0a0" />
<rect x="859" y="324" width="161" height="1" fill="#696969" />
<rect x="859" y="324" width="1" height="21" fill="#696969" />
<rect x="858" y="345" width="163" height="1" fill="#ffffff" />
<rect x="1020" y="323" width="1" height="23" fill="#ffffff" />
<rect x="859" y="344" width="161" height="1" fill="#e3e3e3" />
<rect x="1019" y="324" width="1" height="21" fill="#e3e3e3" />
<circle cx="874.5" cy="334.5" r="6" fill="#fff" stroke="#333333" stroke-width="1"/>
<circle cx="874.5" cy="334.5" r="3.2" fill="#333333"/>
<text x="886.00" y="339.5" fill="#600040" style="font-family:'Liberation Sans';font-size:12.5px;font-weight:bold;font-style:normal" xml:space="preserve" textLength="37.42" lengthAdjust="spacingAndGlyphs" >normal</text>
<circle cx="938.5" cy="334.5" r="6" fill="#fff" stroke="#333333" stroke-width="1"/>
<text x="951.00" y="339.5" fill="#600040" style="font-family:'Liberation Sans';font-size:12.5px;font-weight:bold;font-style:normal" xml:space="preserve" textLength="16.95" lengthAdjust="spacingAndGlyphs" >x 2</text>
<circle cx="982.5" cy="334.5" r="6" fill="#fff" stroke="#333333" stroke-width="1"/>
<text x="994.70" y="339.5" fill="#600040" style="font-family:'Liberation Sans';font-size:12.5px;font-weight:bold;font-style:normal" xml:space="preserve" textLength="17.75" lengthAdjust="spacingAndGlyphs" >x 5</text>
<text x="1043.40" y="339" fill="#800080" style="font-family:'Liberation Sans';font-size:12.5px;font-weight:bold;font-style:normal" xml:space="preserve" textLength="71.06" lengthAdjust="spacingAndGlyphs" >Form opacity</text>
<rect x="1022" y="346" width="115" height="21" fill="#fff8d2" />
<rect x="1027.5" y="352.5" width="98" height="3" fill="#e6e6e6" stroke="#d6d6d6"/>
<rect x="1032" y="362" width="1" height="4" fill="#a0a0a0" />
<rect x="1051" y="362" width="1" height="4" fill="#a0a0a0" />
<rect x="1070" y="362" width="1" height="4" fill="#a0a0a0" />
<rect x="1089" y="362" width="1" height="4" fill="#a0a0a0" />
<rect x="1108" y="362" width="1" height="4" fill="#a0a0a0" />
<rect x="1127" y="362" width="1" height="4" fill="#a0a0a0" />
<path d="M1122 347.5 H1130 V357 L1126 360.3 L1122 357 Z" fill="#0078d7" stroke="#0060c0" stroke-width="0.6"/>
<text x="829.70" y="364" fill="#800000" style="font-family:'Liberation Sans';font-size:12.5px;font-weight:bold;font-style:normal" xml:space="preserve" textLength="102.95" lengthAdjust="spacingAndGlyphs" >Scroll range x1.25</text>
<rect x="940.5" y="353.5" width="12" height="12" fill="#ffffff" stroke="#333333" stroke-width="1"/>
<text x="814.00" y="393.2" fill="#000" style="font-family:'Liberation Sans';font-size:12px;font-weight:normal;font-style:normal" xml:space="preserve" textLength="93.00" lengthAdjust="spacingAndGlyphs" >RMS fit 0.0 ±0.1 km</text>
<rect x="806" y="402" width="328" height="409" fill="#ffffff" />
<rect x="806" y="402" width="328" height="1" fill="#a0a0a0" />
<rect x="806" y="402" width="1" height="409" fill="#a0a0a0" />
<rect x="807" y="403" width="326" height="1" fill="#696969" />
<rect x="807" y="403" width="1" height="407" fill="#696969" />
<rect x="806" y="810" width="328" height="1" fill="#ffffff" />
<rect x="1133" y="402" width="1" height="409" fill="#ffffff" />
<rect x="807" y="809" width="326" height="1" fill="#e3e3e3" />
<rect x="1132" y="403" width="1" height="407" fill="#e3e3e3" />
<rect x="813" y="410" width="66" height="2" fill="#4b0082" />
<rect x="813" y="422" width="66" height="2" fill="#ff0000" />
<rect x="813" y="434" width="66" height="2" fill="#0000ff" />
<rect x="813" y="446" width="66" height="2" fill="#8a2be2" />
<circle cx="815.5" cy="459.5" r="1.1" fill="none" stroke="#ff5fc0" stroke-width="0.8"/>
<circle cx="830.53" cy="459.5" r="1.1" fill="none" stroke="#ff5fc0" stroke-width="0.8"/>
<circle cx="845.56" cy="459.5" r="1.1" fill="none" stroke="#ff5fc0" stroke-width="0.8"/>
<circle cx="860.59" cy="459.5" r="1.1" fill="none" stroke="#ff5fc0" stroke-width="0.8"/>
<circle cx="875.62" cy="459.5" r="1.1" fill="none" stroke="#ff5fc0" stroke-width="0.8"/>
<svg x="808" y="404" width="324" height="389" viewBox="808 404 324 389" overflow="hidden">
<text x="901.60" y="416.2" fill="#000" style="font-family:'Liberation Mono';font-size:12.2px;font-weight:normal;font-style:normal" xml:space="preserve" letter-spacing="0.9">1    P Montague, near Adelaide</text>
<text x="901.60" y="428.2" fill="#000" style="font-family:'Liberation Mono';font-size:12.2px;font-weight:normal;font-style:normal" xml:space="preserve" letter-spacing="0.9">2    P Martinaitis, near Salisbury</text>
<text x="901.60" y="440.2" fill="#000" style="font-family:'Liberation Mono';font-size:12.2px;font-weight:normal;font-style:normal" xml:space="preserve" letter-spacing="0.9">3    J Rueff, near Cudlee Creek</text>
<text x="901.60" y="452.2" fill="#000" style="font-family:'Liberation Mono';font-size:12.2px;font-weight:normal;font-style:normal" xml:space="preserve" letter-spacing="0.9">4(M) A Wendelborn, near Underdale</text>
<text x="901.60" y="464.2" fill="#000" style="font-family:'Liberation Mono';font-size:12.2px;font-weight:normal;font-style:normal" xml:space="preserve" letter-spacing="0.9">5(P) Predicted</text>
</svg>
<rect x="808" y="793" width="324" height="16" fill="#f0f0f0" />
<rect x="825" y="794" width="184" height="15" fill="#cdcdcd" />
<path d="M818.5 797.5 L815 801 L818.5 804.5" fill="none" stroke="#606060" stroke-width="1.8"/>
<path d="M1121.5 797.5 L1125 801 L1121.5 804.5" fill="none" stroke="#606060" stroke-width="1.8"/>
</svg></body></html>
